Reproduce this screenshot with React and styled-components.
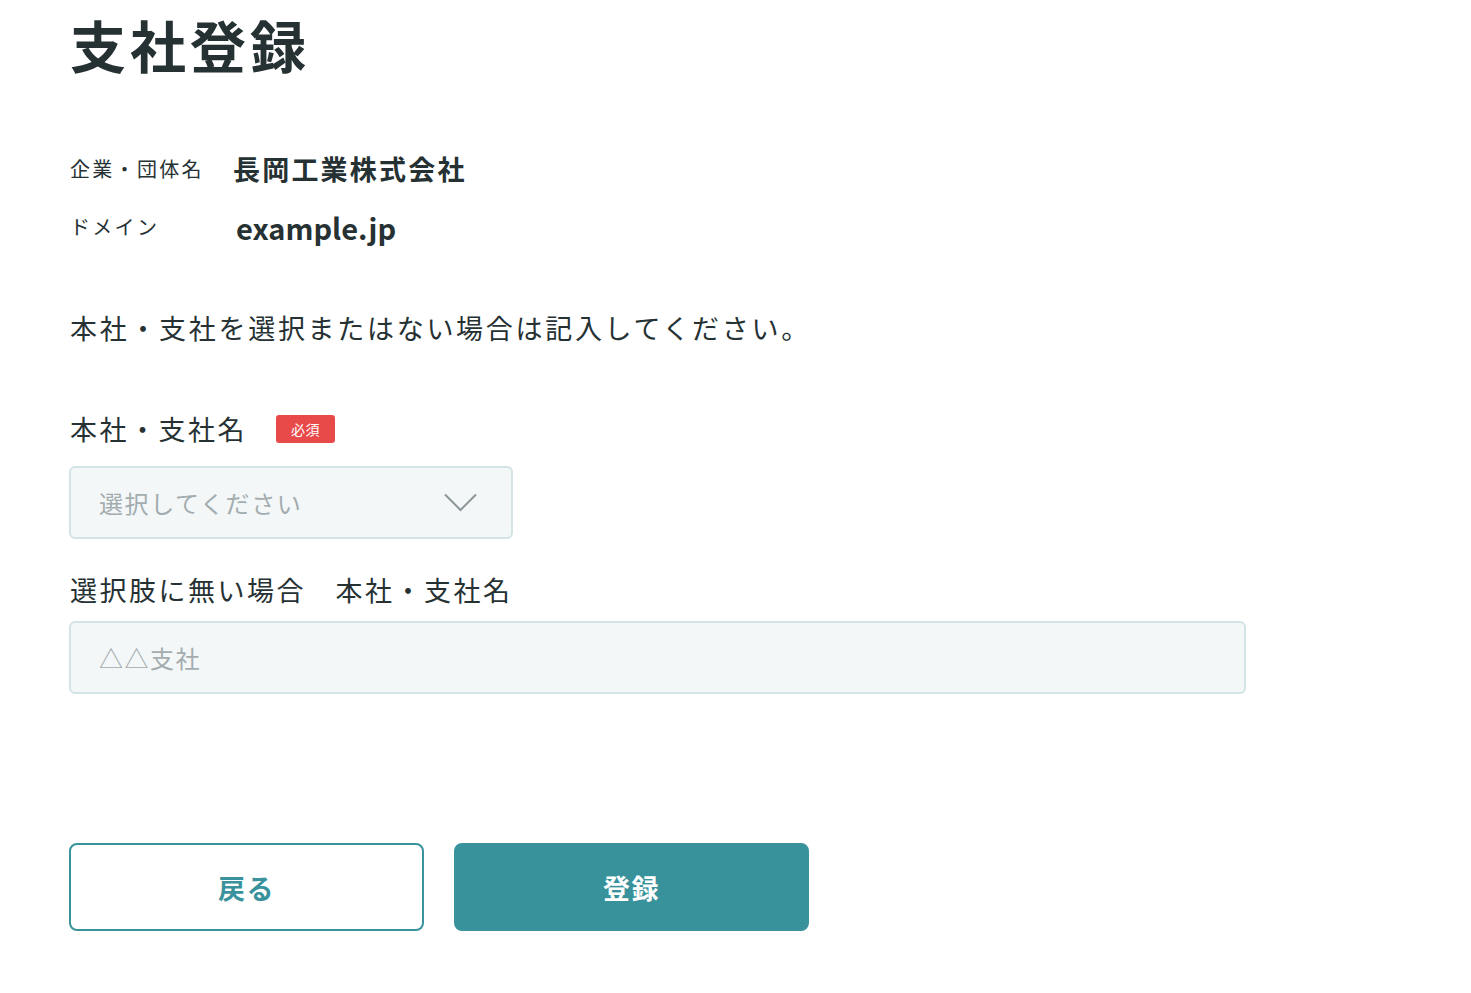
import React from "react";
import styled, { createGlobalStyle } from "styled-components";

const GlobalStyle = createGlobalStyle`
  body {
    margin: 0;
    background: #fff;
    font-family: "Noto Sans CJK JP", "Noto Sans", sans-serif;
    color: #263133;
  }
`;

const Page = styled.main`
  padding: 8px 69px 60px 69px;
`;

const Title = styled.h1`
  margin: 0 0 0 1px;
  font-size: 56px;
  line-height: 72px;
  font-weight: 700;
  letter-spacing: 4px;
`;

const InfoList = styled.dl`
  margin: 67px 0 0 1px;
  display: grid;
  grid-template-columns: 163px auto;
  row-gap: 14px;
  align-items: center;
`;

const InfoLabel = styled.dt`
  font-size: 20px;
  line-height: 44px;
  letter-spacing: 2.3px;
`;

const InfoValue = styled.dd`
  margin: 0;
  font-size: ${(p) => (p.$latin ? "29px" : "27px")};
  padding-left: ${(p) => (p.$latin ? "3px" : "0")};
  font-weight: 700;
  line-height: 44px;
  letter-spacing: ${(p) => (p.$latin ? "0" : "2.2px")};
`;

const Note = styled.p`
  margin: 59px 0 0 1px;
  font-size: 27px;
  line-height: 40px;
  letter-spacing: 2.7px;
`;

const Field = styled.div`
  margin-top: ${(p) => p.$top || "0"};
`;

const FieldLabel = styled.label`
  display: flex;
  align-items: center;
  gap: 29px;
  margin: 0 0 ${(p) => p.$gap || "14px"} 1px;
  font-size: 27px;
  line-height: 40px;
  letter-spacing: 2.5px;
`;

const Badge = styled.span`
  display: inline-flex;
  align-items: center;
  justify-content: center;
  width: 59px;
  height: 28px;
  border-radius: 3px;
  background: #e84a4a;
  color: #fff;
  font-size: 14px;
  line-height: 1;
  letter-spacing: 0.5px;
`;

const SelectBox = styled.div`
  box-sizing: border-box;
  width: 444px;
  height: 73px;
  display: flex;
  align-items: center;
  justify-content: space-between;
  padding: 0 34px 0 28px;
  background: #f3f7f8;
  border: 2px solid #d4e3e6;
  border-radius: 6px;
  font-size: 24px;
  letter-spacing: 1.6px;
  color: #a3acae;
`;

const TextInput = styled.input`
  box-sizing: border-box;
  display: block;
  width: 1177px;
  height: 73px;
  padding: 0 28px;
  background: #f3f7f8;
  border: 2px solid #d4e3e6;
  border-radius: 6px;
  font-family: inherit;
  font-size: 24px;
  letter-spacing: 1.5px;
  color: #263133;
  outline: none;

  &::placeholder {
    color: #a3acae;
  }
`;

const Actions = styled.div`
  display: flex;
  gap: 30px;
  margin-top: 149px;
`;

const Button = styled.button`
  box-sizing: border-box;
  width: 355px;
  height: 88px;
  border-radius: 8px;
  border: 2px solid #3a939c;
  background: ${(p) => (p.$primary ? "#38929b" : "#fff")};
  color: ${(p) => (p.$primary ? "#fff" : "#3a939c")};
  font-family: inherit;
  font-size: 27px;
  font-weight: 700;
  letter-spacing: 1.5px;
  cursor: pointer;
`;

const Chevron = () => (
  <svg width="33" height="19" viewBox="0 0 33 19" fill="none">
    <path d="M1 1.5 L16.5 17 L32 1.5" stroke="#8a9698" strokeWidth="2" />
  </svg>
);

export default function App() {
  return (
    <>
      <GlobalStyle />
      <Page>
        <Title>支社登録</Title>
        <InfoList>
          <InfoLabel>企業・団体名</InfoLabel>
          <InfoValue>長岡工業株式会社</InfoValue>
          <InfoLabel>ドメイン</InfoLabel>
          <InfoValue $latin>example.jp</InfoValue>
        </InfoList>
        <Note>本社・支社を選択またはない場合は記入してください。</Note>
        <Field $top="61px">
          <FieldLabel $gap="17px">
            本社・支社名<Badge>必須</Badge>
          </FieldLabel>
          <SelectBox>
            <span>選択してください</span>
            <Chevron />
          </SelectBox>
        </Field>
        <Field $top="31px">
          <FieldLabel $gap="11px">選択肢に無い場合　本社・支社名</FieldLabel>
          <TextInput placeholder="△△支社" />
        </Field>
        <Actions>
          <Button>戻る</Button>
          <Button $primary>登録</Button>
        </Actions>
      </Page>
    </>
  );
}
